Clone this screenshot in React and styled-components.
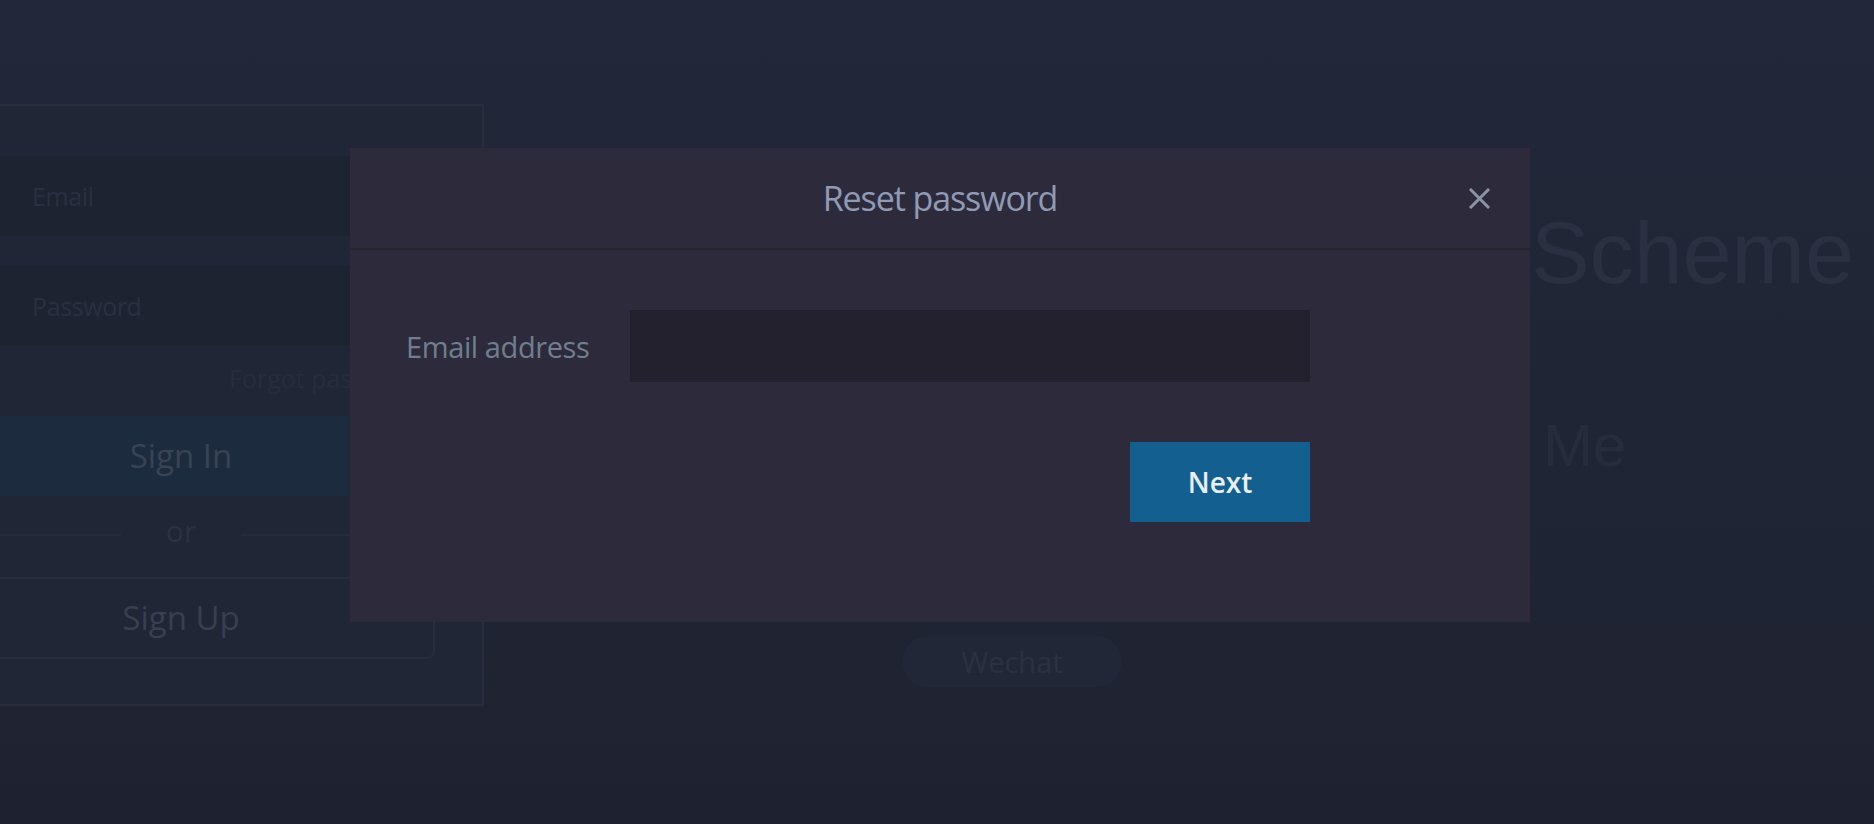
import React from "react";
import styled, { createGlobalStyle } from "styled-components";

const GlobalStyle = createGlobalStyle`
  html, body {
    margin: 0;
    padding: 0;
    height: 100%;
    overflow: hidden;
  }
  body {
    font-family: "Open Sans", "Noto Sans", sans-serif;
    background: #1e2230;
  }
`;

const uiFont = `"Open Sans", "Noto Sans", "Noto Sans CJK SC", sans-serif`;

const Page = styled.div`
  display: flex;
  align-items: flex-start;
  width: 1874px;
  height: 824px;
  padding-top: 104px;
  box-sizing: border-box;
  background: linear-gradient(180deg, #222839 0%, #202536 50%, #1e2230 100%);
  overflow: hidden;
`;

const LoginBox = styled.section`
  flex: 0 0 606px;
  margin-left: -122px;
  box-sizing: border-box;
  padding: 50px 47px 45px 47px;
  border: 2px solid #272d3d;
  background: #202636;
  font-family: ${uiFont};
`;

const Form = styled.div`
  display: flex;
  flex-direction: column;
`;

const Field = styled.div`
  height: 80px;
  line-height: 80px;
  padding-left: 105px;
  background: #1e2331;
  font-size: 25px;
  letter-spacing: -0.4px;
  color: #283041;
  margin-bottom: ${(p) => p.$gap || 0}px;
`;

const ForgotRow = styled.div`
  height: 70px;
  box-sizing: border-box;
  padding-top: 17px;
  line-height: 30px;
  text-align: right;
  font-size: 25px;
  color: #262d3d;
`;

const PrimaryButton = styled.div`
  height: 80px;
  line-height: 80px;
  text-align: center;
  background: #1c2b3e;
  color: #3a4354;
  font-size: 33px;
`;

const OrRow = styled.div`
  display: flex;
  align-items: center;
  height: 81px;
  box-sizing: border-box;
  padding: 15px 0 26px;
`;

const OrLine = styled.div`
  flex: 1;
  height: 2px;
  margin-top: 8px;
  background: #262c3c;
`;

const OrText = styled.span`
  flex: 0 0 120px;
  text-align: center;
  line-height: 40px;
  font-size: 30px;
  color: #2a3141;
`;

const OutlineButton = styled.div`
  height: 78px;
  line-height: 78px;
  text-align: center;
  border: 2px solid #272d3d;
  border-radius: 8px;
  color: #383f4f;
  font-size: 33px;
`;

const Hero = styled.section`
  flex: 1;
  display: flex;
  flex-direction: column;
  align-items: flex-start;
  padding-top: 105px;
`;

const HeroTitle = styled.h1`
  margin: 0 0 0 1047px;
  font-family: "Liberation Sans", Arial, sans-serif;
  font-weight: 400;
  font-size: 88px;
  line-height: 88px;
  color: #2a3041;
  white-space: nowrap;
`;

const HeroSub = styled.h2`
  margin: 119px 0 0 1059px;
  font-family: "Liberation Sans", Arial, sans-serif;
  font-weight: 400;
  font-size: 60px;
  line-height: 60px;
  color: #262c3c;
  white-space: nowrap;
`;

const Pill = styled.div`
  margin: 160px 0 0 418px;
  width: 220px;
  height: 51px;
  line-height: 51px;
  border-radius: 26px;
  text-align: center;
  background: #222738;
  color: #2b3142;
  font-family: ${uiFont};
  font-size: 29px;
`;

const Overlay = styled.div`
  position: fixed;
  inset: 0;
  display: flex;
  justify-content: center;
  align-items: flex-start;
  padding: 148px 0 0 6px;
`;

const Modal = styled.div`
  width: 1180px;
  background: #2d2b3b;
  font-family: ${uiFont};
`;

const ModalHeader = styled.header`
  display: grid;
  grid-template-columns: 1fr auto 1fr;
  align-items: center;
  height: 100px;
  border-bottom: 2px solid #25242f;
`;

const ModalTitle = styled.h3`
  grid-column: 2;
  margin: 0;
  font-weight: 400;
  font-size: 34px;
  letter-spacing: -1.1px;
  line-height: 100px;
  color: #8f9bb4;
`;

const CloseButton = styled.button`
  grid-column: 3;
  justify-self: end;
  display: flex;
  margin-right: 40px;
  padding: 0;
  border: 0;
  background: none;
  cursor: pointer;
`;

const ModalBody = styled.div`
  padding: 60px 220px 100px 56px;
`;

const FormRow = styled.div`
  display: flex;
  align-items: center;
`;

const Label = styled.label`
  flex: 0 0 224px;
  font-size: 29px;
  letter-spacing: -0.4px;
  color: #6f7f8f;
`;

const Input = styled.input`
  flex: 1;
  height: 72px;
  box-sizing: border-box;
  border: 0;
  outline: none;
  padding: 0 20px;
  background: #22212d;
  color: #8f9bb4;
  font-size: 26px;
  font-family: ${uiFont};
`;

const Actions = styled.div`
  display: flex;
  justify-content: flex-end;
  margin-top: 60px;
`;

const NextButton = styled.button`
  width: 180px;
  height: 80px;
  border: 0;
  padding: 0;
  background: #135f8f;
  color: #e9eef2;
  font-family: ${uiFont};
  font-size: 28px;
  font-weight: 600;
  line-height: 80px;
  cursor: pointer;
`;

function CloseIcon() {
  return (
    <svg width="21" height="21" viewBox="0 0 21 21">
      <path
        d="M2 2 L19 19 M19 2 L2 19"
        stroke="#8995a6"
        strokeWidth="3"
        strokeLinecap="square"
        fill="none"
      />
    </svg>
  );
}

export default function App() {
  return (
    <>
      <GlobalStyle />
      <Page>
        <LoginBox>
          <Form>
            <Field $gap={30}>Email</Field>
            <Field>Password</Field>
            <ForgotRow>Forgot password?</ForgotRow>
            <PrimaryButton>Sign In</PrimaryButton>
            <OrRow>
              <OrLine />
              <OrText>or</OrText>
              <OrLine />
            </OrRow>
            <OutlineButton>Sign Up</OutlineButton>
          </Form>
        </LoginBox>
        <Hero>
          <HeroTitle>Scheme</HeroTitle>
          <HeroSub>Me</HeroSub>
          <Pill>Wechat</Pill>
        </Hero>
      </Page>
      <Overlay>
        <Modal>
          <ModalHeader>
            <ModalTitle>Reset password</ModalTitle>
            <CloseButton aria-label="Close">
              <CloseIcon />
            </CloseButton>
          </ModalHeader>
          <ModalBody>
            <FormRow>
              <Label>Email address</Label>
              <Input type="email" />
            </FormRow>
            <Actions>
              <NextButton>Next</NextButton>
            </Actions>
          </ModalBody>
        </Modal>
      </Overlay>
    </>
  );
}
